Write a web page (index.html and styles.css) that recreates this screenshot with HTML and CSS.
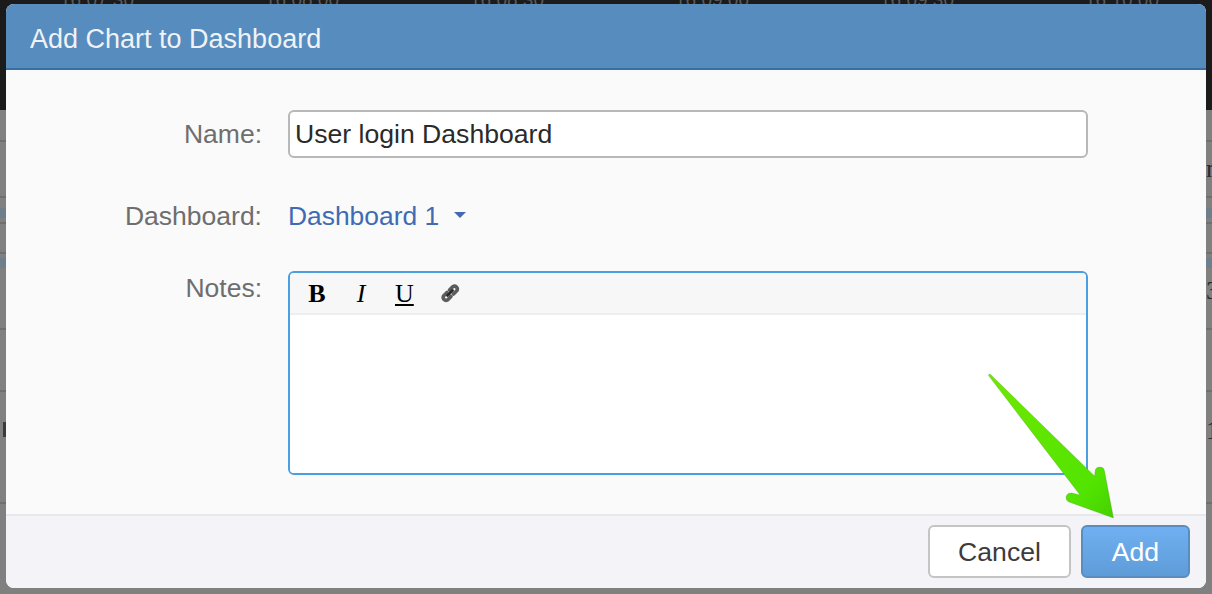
FILE: index.html
```html
<!DOCTYPE html>
<html lang="en">
<head>
<meta charset="utf-8">
<title>Add Chart to Dashboard</title>
<link rel="stylesheet" href="styles.css">
</head>
<body>
<div class="backdrop">
  <div class="topbar">
    <span>16:07:30</span><span>16:08:00</span><span>16:08:30</span><span>16:09:00</span><span>16:09:30</span><span>16:10:00</span>
  </div>
  <div class="row r1"></div>
  <div class="row r2"><span class="edge">n</span></div>
  <div class="row r3 band"></div>
  <div class="row r4"></div>
  <div class="row r5 band"><span class="edge">3</span></div>
  <div class="row r6"></div>
  <div class="row r7"><span class="edge-left"></span><span class="edge">1</span></div>
  <div class="row r8"></div>
</div>

<div class="modal">
  <header class="modal-head">Add Chart to Dashboard</header>
  <main class="modal-body">
    <div class="field field-name">
      <label class="label">Name:</label>
      <div class="input">User login Dashboard</div>
    </div>
    <div class="field field-dash">
      <label class="label">Dashboard:</label>
      <a class="picker">Dashboard 1<span class="caret"></span></a>
    </div>
    <div class="field field-notes">
      <label class="label label-notes">Notes:</label>
      <div class="editor">
        <div class="toolbar">
          <span class="tool tool-b">B</span>
          <span class="tool tool-i">I</span>
          <span class="tool tool-u">U</span>
          <svg class="tool-link" width="22" height="22" viewBox="0 0 22 22" fill="none" stroke-linecap="round">
            <path d="M8 10.500 L4.500 14 A3 3 0 0 0 8.500 18 L12 14.500" stroke="#5c5c5c" stroke-width="3.600"/>
            <path d="M10.500 8 L14 4.500 A3 3 0 0 1 18 8.500 L14.500 12" stroke="#5c5c5c" stroke-width="3.600"/>
            <path d="M8.500 13.500 L13.500 8.500" stroke="#2a2a2a" stroke-width="2.800"/>
          </svg>
        </div>
        <div class="editor-area"></div>
      </div>
    </div>
  </main>
  <footer class="modal-foot">
    <button class="btn btn-cancel">Cancel</button>
    <button class="btn btn-add">Add</button>
  </footer>
</div>

<svg class="arrow" width="1212" height="594" viewBox="0 0 1212 594">
  <defs>
    <linearGradient id="g" x1="0" y1="0" x2="1" y2="1">
      <stop offset="0" stop-color="#6fe800"/>
      <stop offset="0.8" stop-color="#52e400"/>
      <stop offset="1" stop-color="#45d000"/>
    </linearGradient>
  </defs>
  <path d="M988.500 375.500 Q989 373 991 375 L1094.500 476 L1095 472 Q1095 467 1100 467 Q1104 467 1104.500 471 L1113.500 518 L1069 502 Q1066 501 1066 497 Q1067 492.500 1072 493 L1080 495 Z" fill="url(#g)" stroke="#5a7a50" stroke-opacity=".35" stroke-width=".7"/>
</svg>
</body>
</html>
```
FILE: styles.css
```css
* { box-sizing: border-box; }
html, body { margin: 0; padding: 0; }
body {
  width: 1212px;
  height: 594px;
  overflow: hidden;
  position: relative;
  background: #808080;
  font-family: "Liberation Sans", Arial, sans-serif;
}

/* dimmed page behind the dialog */
.backdrop { height: 594px; overflow: hidden; }
.topbar {
  height: 120px;
  background: #1b1b1b;
  margin-top: -10px;
  padding-left: 60px;
  display: grid;
  grid-template-columns: repeat(6, 205px);
  color: #5a5a5a;
  font-size: 19px;
  line-height: 20px;
}
.row {
  display: flex;
  justify-content: flex-end;
  align-items: center;
  border-bottom: 2px solid #6f6f6f;
  font-family: "Liberation Serif", serif;
  font-size: 26px;
  color: #2c2c2c;
  background: #808080;
}
.r1 { height: 32px; }
.r2 { height: 56px; }
.r3 { height: 26px; }
.r4 { height: 30px; }
.r5 { height: 76px; }
.r6 { height: 62px; }
.r7 { height: 112px; justify-content: space-between; align-items: flex-start; padding-top: 26px; }
.r8 { height: 90px; border-bottom: 0; }
.r3.band { background: linear-gradient(#808080 0 10px, #6e7e8b 10px 20px, #808080 20px); }
.r5.band { background: linear-gradient(#808080 0 4px, #6e7e8b 4px 14px, #808080 14px); }
.edge { margin-right: -7px; line-height: 26px; }
.edge-left { width: 3px; height: 15px; margin: 4px 0 0 3px; background: #3e3a38; }

/* dialog */
.modal {
  position: absolute;
  left: 6px;
  top: 4px;
  width: 1200px;
  height: 584px;
  border-radius: 8px;
  overflow: hidden;
  display: flex;
  flex-direction: column;
  background: #fafafa;
}
.modal-head {
  height: 66px;
  flex: none;
  padding: 7px 24px 0;
  display: flex;
  align-items: center;
  background: #578cbf;
  border-bottom: 2px solid #386ea3;
  color: #f0f2f5;
  font-size: 27px;
}
.modal-body {
  flex: 1;
  padding-top: 40px;
  display: flex;
  flex-direction: column;
}
.field {
  display: grid;
  grid-template-columns: 256px 800px;
  column-gap: 26px;
  align-items: center;
}
.label {
  text-align: right;
  color: #6e6e6e;
  font-size: 26.500px;
}
.field-dash { height: 38px; margin-top: 39px; }
.field-notes { margin-top: 36px; align-items: start; }
.label-notes { line-height: 34px; }
.input {
  height: 48px;
  border: 2px solid #b8b8b8;
  border-radius: 6px;
  background: #fff;
  padding: 0 5px;
  display: flex;
  align-items: center;
  color: #2a2a2a;
  font-size: 26.600px;
}
.picker {
  color: #3f6bb5;
  font-size: 26.400px;
  display: flex;
  align-items: center;
}
.caret {
  width: 0;
  height: 0;
  margin: 0 0 2px 15px;
  border-left: 6px solid transparent;
  border-right: 6px solid transparent;
  border-top: 6px solid #4469b0;
}
.editor {
  height: 204px;
  border: 2px solid #4a9fe2;
  border-radius: 6px;
  overflow: hidden;
  background: #fff;
}
.toolbar {
  height: 42px;
  background: #f7f7f7;
  border-bottom: 2px solid #eeeeee;
  padding: 2px 0 0 18px;
  display: flex;
  align-items: center;
  color: #000;
  font-family: "Liberation Serif", serif;
  font-size: 26px;
}
.tool { width: 18px; text-align: center; line-height: 28px; }
.tool-b { font-weight: 700; }
.tool-i { font-style: italic; margin-left: 26px; }
.tool-u { text-decoration: underline; margin-left: 25px; }
.tool-link { margin-left: 26px; margin-top: -2px; }
.editor-area { height: 158px; background: #fff; }

.modal-foot {
  height: 74px;
  flex: none;
  border-top: 2px solid #e8e8ec;
  background: #f3f3f8;
  padding: 9px 16px 0 0;
  display: flex;
  justify-content: flex-end;
  align-items: flex-start;
  gap: 10px;
}
.btn {
  height: 53px;
  border-radius: 6px;
  font-family: "Liberation Sans", Arial, sans-serif;
  font-size: 26.600px;
  padding: 2px 0 0;
}
.btn-cancel { width: 143px; background: #fff; border: 2px solid #c4c4c4; color: #3c3c3c; }
.btn-add {
  width: 109px;
  background: linear-gradient(#70b0f2, #5e9cd8);
  border: 2px solid #5a8dbd;
  color: #fff;
}

/* annotation arrow drawn over the dialog */
.arrow { position: absolute; left: 0; top: 0; pointer-events: none; }
```
